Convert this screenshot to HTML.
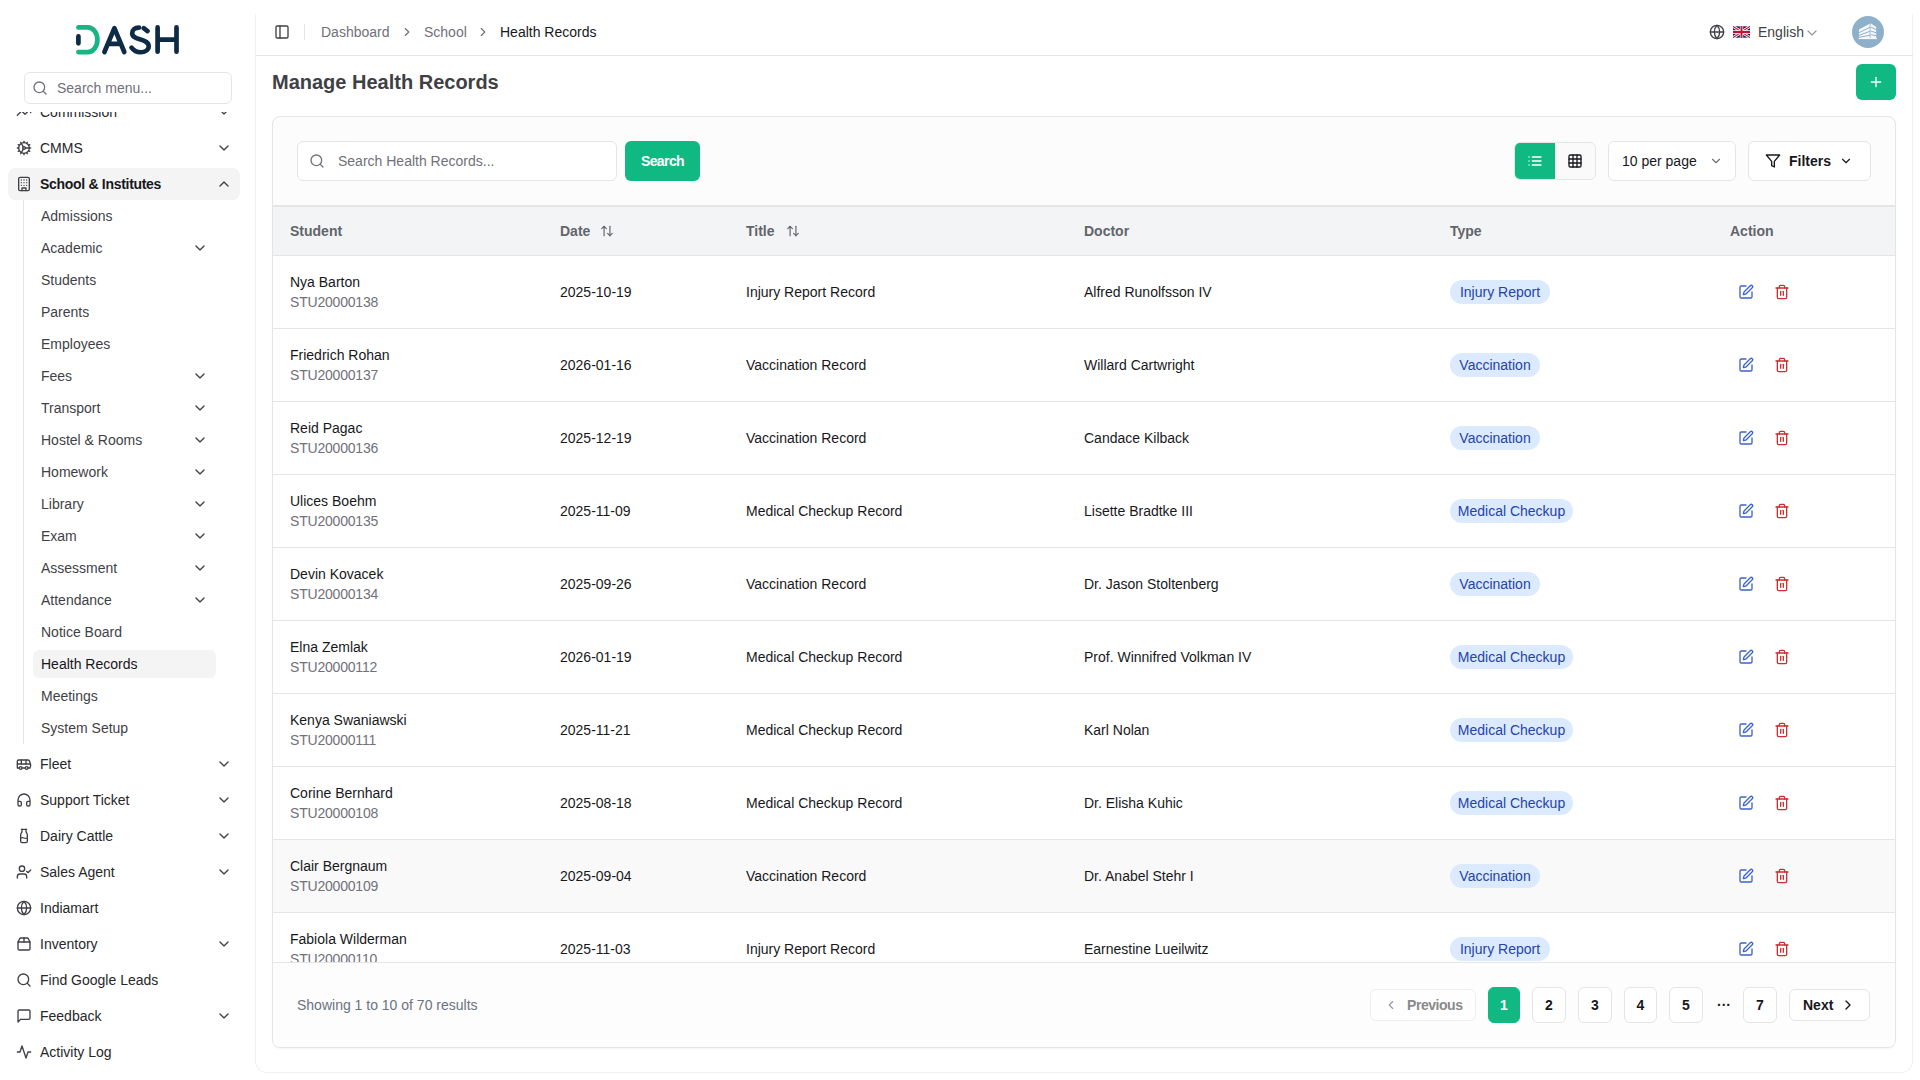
<!DOCTYPE html><html><head><meta charset="utf-8"><style>
*{box-sizing:border-box;margin:0;padding:0}
html,body{width:1920px;height:1080px;overflow:hidden;background:#fff;font-family:"Liberation Sans",sans-serif;font-size:14px;color:#18181b}
.abs{position:absolute}
svg{display:block}
#sidebar{position:absolute;left:0;top:0;width:256px;height:1080px;background:#fff}
#logo{position:absolute;left:76px;top:25px}
#sbsearch{position:absolute;left:24px;top:72px;width:208px;height:32px;border:1px solid #e5e5e5;border-radius:6px;background:#fff}
#sbsearch svg{position:absolute;left:7px;top:7px}
#sbsearch span{position:absolute;left:32px;top:5px;line-height:20px;color:#71717a}
#nav{position:absolute;left:0;top:112px;width:256px;height:968px;overflow:hidden}
.ni{position:absolute;left:8px;width:232px;height:32px;border-radius:8px;color:#27272a}
.ni svg.i{position:absolute;left:8px;top:8px;color:#3f3f46}
.ni .t{position:absolute;left:32px;top:6px;line-height:20px;white-space:nowrap}
.ni svg.c{position:absolute;left:208px;top:8px;color:#3f3f46}
.ni.act{background:#f4f4f5}
.ni.act .t{font-weight:700;color:#18181b;letter-spacing:-0.3px}
.si{position:absolute;left:33px;width:183px;height:28px;border-radius:6px;color:#3f3f46}
.si .t{position:absolute;left:8px;top:4px;line-height:20px;white-space:nowrap}
.si svg.c{position:absolute;left:159px;top:6px;color:#3f3f46}
.si.act{background:#f4f4f5;color:#18181b}
#subline{position:absolute;left:23px;top:200px;width:1px;height:544px;background:#e5e5e5}
#panel{position:absolute;left:255px;top:-20px;width:1658px;height:1093px;border:1px solid #f0f0f0;border-top:none;border-radius:0 0 12px 12px;background:#fff}
#pfade{position:absolute;left:250px;top:0;width:1670px;height:14px;background:#fff}
#header{position:absolute;left:256px;top:0;width:1657px;height:56px;border-bottom:1px solid #e5e5e5}
.bc{position:absolute;top:22px;line-height:20px;white-space:nowrap;color:#71717a}
#title{position:absolute;left:272px;top:70px;font-size:20px;font-weight:700;line-height:24px;color:#3f3f46;white-space:nowrap}
#addbtn{position:absolute;left:1856px;top:64px;width:40px;height:36px;border-radius:6px;background:#10b981}
#addbtn svg{position:absolute;left:12px;top:10px}
#card{position:absolute;left:272px;top:116px;width:1624px;height:932px;border:1px solid #e5e5e5;border-radius:8px;background:#fcfcfc;overflow:hidden;box-shadow:0 1px 2px rgba(0,0,0,0.04)}
#tsearch{position:absolute;left:297px;top:141px;width:320px;height:40px;border:1px solid #e5e5e5;border-radius:6px;background:#fff}
#tsearch svg{position:absolute;left:11px;top:11px;color:#71717a}
#tsearch span{position:absolute;left:40px;top:9px;line-height:20px;color:#71717a}
#sbtn{position:absolute;left:625px;top:141px;width:75px;height:40px;border-radius:6px;background:#10b981;color:#fff;font-weight:700;text-align:center;line-height:40px;letter-spacing:-0.6px}
#vtog{position:absolute;left:1514px;top:142px;width:82px;height:38px;border:1px solid #e5e5e5;border-radius:6px;background:#fafafa;overflow:hidden}
#vtog .g{position:absolute;left:-1px;top:-1px;width:41px;height:38px;background:#10b981}
#perpage{position:absolute;left:1608px;top:141px;width:128px;height:40px;border:1px solid #e5e5e5;border-radius:6px;background:#fff}
#filters{position:absolute;left:1748px;top:141px;width:123px;height:40px;border:1px solid #e5e5e5;border-radius:6px;background:#fff}
#thead{position:absolute;left:273px;top:205px;width:1622px;height:51px;background:#f3f4f6;border-top:2px solid #e5e5e5;border-bottom:1px solid #e5e5e5}
.th{position:absolute;top:14px;line-height:20px;font-weight:700;color:#62656b;white-space:nowrap}
#tbody{position:absolute;left:273px;top:256px;width:1622px;height:706px;overflow:hidden;background:#fff}
.tr{position:absolute;left:0;width:1622px;height:73px;border-bottom:1px solid #e5e5e5;background:#fff}
.tr.hov{background:#f9f9f9}
.td{position:absolute;line-height:20px;white-space:nowrap;color:#18181b}
.badge{position:absolute;left:1177px;top:24px;height:24px;border-radius:12px;background:#dbeafe;color:#2543a8;padding:0 8px;line-height:24px;white-space:nowrap}
#tfoot{position:absolute;left:273px;top:962px;width:1622px;height:85px;border-top:1px solid #e5e5e5;background:#fdfdfd;border-radius:0 0 7px 7px}
.pg{position:absolute;top:987px;width:34px;height:36px;border:1px solid #e5e5e5;border-radius:6px;background:#fff;text-align:center;line-height:34px;font-weight:700;color:#18181b}
.pg.act{background:#10b981;border-color:#10b981;color:#fff}
</style></head><body>
<div id="sidebar">
<svg id="logo" width="104" height="31" viewBox="0 0 104 31">
<path d="M2.4 2.4 H11.8 A9.6 12.35 0 0 1 11.8 27.1 H2.4" fill="none" stroke="#17b581" stroke-width="4.7" stroke-linecap="round"/>
<path d="M2.4 11.4 V18.3" fill="none" stroke="#0d2b45" stroke-width="4.7" stroke-linecap="round"/>
<path d="M28.4 27 L38.4 3.2 L48.3 27 M32.5 18.9 H44.3" fill="none" stroke="#0d2b45" stroke-width="4.7" stroke-linecap="round" stroke-linejoin="round"/>
<path d="M63 2.6 C58.5 2.6 56.2 5.2 56.2 8.2 C56.2 11.8 59.5 13 63.8 14.3 C68.5 15.7 72.7 17 72.7 21.2 C72.7 25 69 27.2 64.5 27.2 C60.5 27.2 57.5 25.3 55.5 22.6" fill="none" stroke="#0d2b45" stroke-width="4.6" stroke-linecap="round"/>
<path d="M67.7 3.2 L71.5 6.1" fill="none" stroke="#0d2b45" stroke-width="4.6" stroke-linecap="round"/>
<path d="M81.6 2.4 V26.7 M100.5 2.4 V26.7 M81.6 14.7 H100.5" fill="none" stroke="#0d2b45" stroke-width="4.7" stroke-linecap="round"/>
</svg>
<div id="sbsearch"><svg width="16" height="16" viewBox="0 0 24 24" fill="none" stroke="#71717a" stroke-width="2" stroke-linecap="round" stroke-linejoin="round" ><circle cx="11" cy="11" r="8"/><path d="m21 21-4.3-4.3"/></svg><span>Search menu...</span></div>
<div id="nav">
<div class="ni" style="top:-16px"><svg class="i" width="16" height="16" viewBox="0 0 24 24" fill="none" stroke="currentColor" stroke-width="2" stroke-linecap="round" stroke-linejoin="round" ><path d="m22 7-8.5 8.5-5-5L2 17"/><path d="M16 7h6v6"/></svg><span class="t">Commission</span><svg class="c" width="16" height="16" viewBox="0 0 24 24" fill="none" stroke="currentColor" stroke-width="2" stroke-linecap="round" stroke-linejoin="round" ><path d="m6 9 6 6 6-6"/></svg></div>
<div class="ni" style="top:20px"><svg class="i" width="16" height="16" viewBox="0 0 24 24" fill="none" stroke="currentColor" stroke-width="2" stroke-linecap="round" stroke-linejoin="round" ><path d="M12 20a8 8 0 1 0 0-16 8 8 0 0 0 0 16Z"/><path d="M12 14a2 2 0 1 0 0-4 2 2 0 0 0 0 4Z"/><path d="M12 2v2"/><path d="M12 22v-2"/><path d="m17 20.66-1-1.73"/><path d="M11 10.27 7 3.34"/><path d="m20.66 17-1.73-1"/><path d="m3.34 7 1.73 1"/><path d="M14 12h8"/><path d="M2 12h2"/><path d="m20.66 7-1.73 1"/><path d="m3.34 17 1.73-1"/><path d="m17 3.34-1 1.73"/><path d="m11 13.73-4 6.93"/></svg><span class="t">CMMS</span><svg class="c" width="16" height="16" viewBox="0 0 24 24" fill="none" stroke="currentColor" stroke-width="2" stroke-linecap="round" stroke-linejoin="round" ><path d="m6 9 6 6 6-6"/></svg></div>
<div class="ni act" style="top:56px"><svg class="i" width="16" height="16" viewBox="0 0 24 24" fill="none" stroke="currentColor" stroke-width="2" stroke-linecap="round" stroke-linejoin="round" ><rect width="16" height="20" x="4" y="2" rx="2" ry="2"/><path d="M9 22v-4h6v4"/><path d="M8 6h.01"/><path d="M16 6h.01"/><path d="M12 6h.01"/><path d="M12 10h.01"/><path d="M12 14h.01"/><path d="M16 10h.01"/><path d="M16 14h.01"/><path d="M8 10h.01"/><path d="M8 14h.01"/></svg><span class="t">School &amp; Institutes</span><svg class="c" width="16" height="16" viewBox="0 0 24 24" fill="none" stroke="currentColor" stroke-width="2" stroke-linecap="round" stroke-linejoin="round" ><path d="m18 15-6-6-6 6"/></svg></div>
<div id="subline" style="top:88px"></div>
<div class="si" style="top:90px"><span class="t">Admissions</span></div>
<div class="si" style="top:122px"><span class="t">Academic</span><svg class="c" width="16" height="16" viewBox="0 0 24 24" fill="none" stroke="currentColor" stroke-width="2" stroke-linecap="round" stroke-linejoin="round" ><path d="m6 9 6 6 6-6"/></svg></div>
<div class="si" style="top:154px"><span class="t">Students</span></div>
<div class="si" style="top:186px"><span class="t">Parents</span></div>
<div class="si" style="top:218px"><span class="t">Employees</span></div>
<div class="si" style="top:250px"><span class="t">Fees</span><svg class="c" width="16" height="16" viewBox="0 0 24 24" fill="none" stroke="currentColor" stroke-width="2" stroke-linecap="round" stroke-linejoin="round" ><path d="m6 9 6 6 6-6"/></svg></div>
<div class="si" style="top:282px"><span class="t">Transport</span><svg class="c" width="16" height="16" viewBox="0 0 24 24" fill="none" stroke="currentColor" stroke-width="2" stroke-linecap="round" stroke-linejoin="round" ><path d="m6 9 6 6 6-6"/></svg></div>
<div class="si" style="top:314px"><span class="t">Hostel &amp; Rooms</span><svg class="c" width="16" height="16" viewBox="0 0 24 24" fill="none" stroke="currentColor" stroke-width="2" stroke-linecap="round" stroke-linejoin="round" ><path d="m6 9 6 6 6-6"/></svg></div>
<div class="si" style="top:346px"><span class="t">Homework</span><svg class="c" width="16" height="16" viewBox="0 0 24 24" fill="none" stroke="currentColor" stroke-width="2" stroke-linecap="round" stroke-linejoin="round" ><path d="m6 9 6 6 6-6"/></svg></div>
<div class="si" style="top:378px"><span class="t">Library</span><svg class="c" width="16" height="16" viewBox="0 0 24 24" fill="none" stroke="currentColor" stroke-width="2" stroke-linecap="round" stroke-linejoin="round" ><path d="m6 9 6 6 6-6"/></svg></div>
<div class="si" style="top:410px"><span class="t">Exam</span><svg class="c" width="16" height="16" viewBox="0 0 24 24" fill="none" stroke="currentColor" stroke-width="2" stroke-linecap="round" stroke-linejoin="round" ><path d="m6 9 6 6 6-6"/></svg></div>
<div class="si" style="top:442px"><span class="t">Assessment</span><svg class="c" width="16" height="16" viewBox="0 0 24 24" fill="none" stroke="currentColor" stroke-width="2" stroke-linecap="round" stroke-linejoin="round" ><path d="m6 9 6 6 6-6"/></svg></div>
<div class="si" style="top:474px"><span class="t">Attendance</span><svg class="c" width="16" height="16" viewBox="0 0 24 24" fill="none" stroke="currentColor" stroke-width="2" stroke-linecap="round" stroke-linejoin="round" ><path d="m6 9 6 6 6-6"/></svg></div>
<div class="si" style="top:506px"><span class="t">Notice Board</span></div>
<div class="si act" style="top:538px"><span class="t">Health Records</span></div>
<div class="si" style="top:570px"><span class="t">Meetings</span></div>
<div class="si" style="top:602px"><span class="t">System Setup</span></div>
<div class="ni" style="top:636px"><svg class="i" width="16" height="16" viewBox="0 0 24 24" fill="none" stroke="currentColor" stroke-width="2" stroke-linecap="round" stroke-linejoin="round" ><path d="M8 6v6"/><path d="M15 6v6"/><path d="M2 12h19.6"/><path d="M18 18h3s.5-1.7.8-2.8c.1-.4.2-.8.2-1.2 0-.4-.1-.8-.2-1.2l-1.4-5C20.1 6.8 19.1 6 18 6H4a2 2 0 0 0-2 2v10h3"/><circle cx="7" cy="18" r="2"/><path d="M9 18h5"/><circle cx="16" cy="18" r="2"/></svg><span class="t">Fleet</span><svg class="c" width="16" height="16" viewBox="0 0 24 24" fill="none" stroke="currentColor" stroke-width="2" stroke-linecap="round" stroke-linejoin="round" ><path d="m6 9 6 6 6-6"/></svg></div>
<div class="ni" style="top:672px"><svg class="i" width="16" height="16" viewBox="0 0 24 24" fill="none" stroke="currentColor" stroke-width="2" stroke-linecap="round" stroke-linejoin="round" ><path d="M3 14h3a2 2 0 0 1 2 2v3a2 2 0 0 1-2 2H5a2 2 0 0 1-2-2v-7a9 9 0 0 1 18 0v7a2 2 0 0 1-2 2h-1a2 2 0 0 1-2-2v-3a2 2 0 0 1 2-2h3"/></svg><span class="t">Support Ticket</span><svg class="c" width="16" height="16" viewBox="0 0 24 24" fill="none" stroke="currentColor" stroke-width="2" stroke-linecap="round" stroke-linejoin="round" ><path d="m6 9 6 6 6-6"/></svg></div>
<div class="ni" style="top:708px"><svg class="i" width="16" height="16" viewBox="0 0 24 24" fill="none" stroke="currentColor" stroke-width="2" stroke-linecap="round" stroke-linejoin="round" ><path d="M8 2h8"/><path d="M9 2v2.789a4 4 0 0 1-.672 2.219l-.656.984A4 4 0 0 0 7 10.212V20a2 2 0 0 0 2 2h6a2 2 0 0 0 2-2v-9.789a4 4 0 0 0-.672-2.219l-.656-.984A4 4 0 0 1 15 4.788V2"/><path d="M7 15a6.472 6.472 0 0 1 5 0 6.47 6.47 0 0 0 5 0"/></svg><span class="t">Dairy Cattle</span><svg class="c" width="16" height="16" viewBox="0 0 24 24" fill="none" stroke="currentColor" stroke-width="2" stroke-linecap="round" stroke-linejoin="round" ><path d="m6 9 6 6 6-6"/></svg></div>
<div class="ni" style="top:744px"><svg class="i" width="16" height="16" viewBox="0 0 24 24" fill="none" stroke="currentColor" stroke-width="2" stroke-linecap="round" stroke-linejoin="round" ><path d="M16 21v-2a4 4 0 0 0-4-4H6a4 4 0 0 0-4 4v2"/><circle cx="9" cy="7" r="4"/><polyline points="16 11 18 13 22 9"/></svg><span class="t">Sales Agent</span><svg class="c" width="16" height="16" viewBox="0 0 24 24" fill="none" stroke="currentColor" stroke-width="2" stroke-linecap="round" stroke-linejoin="round" ><path d="m6 9 6 6 6-6"/></svg></div>
<div class="ni" style="top:780px"><svg class="i" width="16" height="16" viewBox="0 0 24 24" fill="none" stroke="currentColor" stroke-width="2" stroke-linecap="round" stroke-linejoin="round" ><circle cx="12" cy="12" r="10"/><path d="M12 2a14.5 14.5 0 0 0 0 20 14.5 14.5 0 0 0 0-20"/><path d="M2 12h20"/></svg><span class="t">Indiamart</span></div>
<div class="ni" style="top:816px"><svg class="i" width="16" height="16" viewBox="0 0 24 24" fill="none" stroke="currentColor" stroke-width="2" stroke-linecap="round" stroke-linejoin="round" ><path d="M3 9h18v10a2 2 0 0 1-2 2H5a2 2 0 0 1-2-2V9Z"/><path d="m3 9 2.45-4.9A2 2 0 0 1 7.24 3h9.52a2 2 0 0 1 1.8 1.1L21 9"/><path d="M12 3v6"/></svg><span class="t">Inventory</span><svg class="c" width="16" height="16" viewBox="0 0 24 24" fill="none" stroke="currentColor" stroke-width="2" stroke-linecap="round" stroke-linejoin="round" ><path d="m6 9 6 6 6-6"/></svg></div>
<div class="ni" style="top:852px"><svg class="i" width="16" height="16" viewBox="0 0 24 24" fill="none" stroke="currentColor" stroke-width="2" stroke-linecap="round" stroke-linejoin="round" ><circle cx="11" cy="11" r="8"/><path d="m21 21-4.3-4.3"/></svg><span class="t">Find Google Leads</span></div>
<div class="ni" style="top:888px"><svg class="i" width="16" height="16" viewBox="0 0 24 24" fill="none" stroke="currentColor" stroke-width="2" stroke-linecap="round" stroke-linejoin="round" ><path d="M21 15a2 2 0 0 1-2 2H7l-4 4V5a2 2 0 0 1 2-2h14a2 2 0 0 1 2 2z"/></svg><span class="t">Feedback</span><svg class="c" width="16" height="16" viewBox="0 0 24 24" fill="none" stroke="currentColor" stroke-width="2" stroke-linecap="round" stroke-linejoin="round" ><path d="m6 9 6 6 6-6"/></svg></div>
<div class="ni" style="top:924px"><svg class="i" width="16" height="16" viewBox="0 0 24 24" fill="none" stroke="currentColor" stroke-width="2" stroke-linecap="round" stroke-linejoin="round" ><path d="M22 12h-4l-3 9L9 3l-3 9H2"/></svg><span class="t">Activity Log</span></div>
</div></div>
<div id="panel"></div><div id="pfade"></div>
<div id="header">
</div>
<svg width="16" height="16" viewBox="0 0 24 24" fill="none" stroke="#3f3f46" stroke-width="2" stroke-linecap="round" stroke-linejoin="round" style="position:absolute;left:274px;top:24px"><rect width="18" height="18" x="3" y="3" rx="2"/><path d="M9 3v18"/></svg>
<div class="abs" style="left:304px;top:24px;width:1px;height:16px;background:#e5e5e5"></div>
<span class="bc" style="left:321px">Dashboard</span>
<svg width="14" height="14" viewBox="0 0 24 24" fill="none" stroke="#71717a" stroke-width="2" stroke-linecap="round" stroke-linejoin="round" style="position:absolute;left:400px;top:25px"><path d="m9 18 6-6-6-6"/></svg>
<span class="bc" style="left:424px">School</span>
<svg width="14" height="14" viewBox="0 0 24 24" fill="none" stroke="#71717a" stroke-width="2" stroke-linecap="round" stroke-linejoin="round" style="position:absolute;left:476px;top:25px"><path d="m9 18 6-6-6-6"/></svg>
<span class="bc" style="left:500px;color:#18181b">Health Records</span>
<svg width="16" height="16" viewBox="0 0 24 24" fill="none" stroke="#3f3f46" stroke-width="2" stroke-linecap="round" stroke-linejoin="round" style="position:absolute;left:1709px;top:24px"><circle cx="12" cy="12" r="10"/><path d="M12 2a14.5 14.5 0 0 0 0 20 14.5 14.5 0 0 0 0-20"/><path d="M2 12h20"/></svg>
<svg class="abs" style="left:1733px;top:26px" width="17" height="12" viewBox="0 0 60 40">
<rect width="60" height="40" fill="#012169"/>
<path d="M0 0L60 40M60 0L0 40" stroke="#fff" stroke-width="10"/>
<path d="M0 0L60 40M60 0L0 40" stroke="#C8102E" stroke-width="4"/>
<path d="M30 0V40M0 20H60" stroke="#fff" stroke-width="12"/>
<path d="M30 0V40M0 20H60" stroke="#C8102E" stroke-width="7"/>
</svg>
<span class="abs" style="left:1758px;top:22px;line-height:20px;color:#3f3f46">English</span>
<svg width="16" height="16" viewBox="0 0 24 24" fill="none" stroke="#939393" stroke-width="1.7" stroke-linecap="round" stroke-linejoin="round" style="position:absolute;left:1804px;top:24.5px"><path d="m6 9 6 6 6-6"/></svg>
<svg class="abs" style="left:1852px;top:16px" width="32" height="32" viewBox="0 0 32 32">
<circle cx="16" cy="16" r="16" fill="#8fb0cb"/>
<path d="M7 13.6 L18.6 7.3 L18.6 22.3 L7 22.3 Z M18.6 7.3 L24.2 11 L24.2 22.3 L18.6 22.3 Z" fill="#f4f8fb"/>
<g stroke="#8fb0cb" stroke-width="1" fill="none">
<path d="M6.5 16.9 L18.1 11.2 M6.5 19.6 L18.1 15.2 M19.1 11.2 L24.7 13.9 M19.1 15.2 L24.7 16.9 M19.1 18.8 L24.7 19.6 M6.5 21.4 L18.1 19.2"/>
<path d="M18.1 7 V22.5" stroke-width="0.8"/>
</g>
<path d="M6.5 22.6 H25" stroke="#fff" stroke-width="1"/>
</svg>
<div id="title">Manage Health Records</div>
<div id="addbtn"><svg width="16" height="16" viewBox="0 0 24 24" fill="none" stroke="#fff" stroke-width="2" stroke-linecap="round" stroke-linejoin="round" ><path d="M5 12h14"/><path d="M12 5v14"/></svg></div>
<div id="card"></div>
<div id="tsearch"><svg width="16" height="16" viewBox="0 0 24 24" fill="none" stroke="#71717a" stroke-width="2" stroke-linecap="round" stroke-linejoin="round" ><circle cx="11" cy="11" r="8"/><path d="m21 21-4.3-4.3"/></svg><span>Search Health Records...</span></div>
<div id="sbtn">Search</div>
<div id="vtog"><div class="g"></div><svg width="16" height="16" viewBox="0 0 24 24" fill="none" stroke="#fff" stroke-width="2" stroke-linecap="round" stroke-linejoin="round" style="position:absolute;left:12px;top:10px"><path d="M3 12h.01"/><path d="M3 18h.01"/><path d="M3 6h.01"/><path d="M8 12h13"/><path d="M8 18h13"/><path d="M8 6h13"/></svg><svg width="16" height="16" viewBox="0 0 24 24" fill="none" stroke="#18181b" stroke-width="2" stroke-linecap="round" stroke-linejoin="round" style="position:absolute;left:52px;top:10px"><rect width="18" height="18" x="3" y="3" rx="2"/><path d="M3 9h18"/><path d="M3 15h18"/><path d="M9 3v18"/><path d="M15 3v18"/></svg></div>
<div id="perpage"><span class="abs" style="left:13px;top:9px;line-height:20px;color:#18181b">10 per page</span><svg width="14" height="14" viewBox="0 0 24 24" fill="none" stroke="#71717a" stroke-width="2" stroke-linecap="round" stroke-linejoin="round" style="position:absolute;left:100px;top:12px"><path d="m6 9 6 6 6-6"/></svg></div>
<div id="filters"><svg width="16" height="16" viewBox="0 0 24 24" fill="none" stroke="#18181b" stroke-width="2" stroke-linecap="round" stroke-linejoin="round" style="position:absolute;left:16px;top:11px"><polygon points="22 3 2 3 10 12.46 10 19 14 21 14 12.46 22 3"/></svg><span class="abs" style="left:40px;top:9px;line-height:20px;font-weight:700;color:#18181b">Filters</span><svg width="14" height="14" viewBox="0 0 24 24" fill="none" stroke="#18181b" stroke-width="2" stroke-linecap="round" stroke-linejoin="round" style="position:absolute;left:90px;top:12px"><path d="m6 9 6 6 6-6"/></svg></div>
<div id="thead">
<span class="th" style="left:17px">Student</span>
<span class="th" style="left:287px">Date</span><svg width="14" height="14" viewBox="0 0 24 24" fill="none" stroke="#62656b" stroke-width="2" stroke-linecap="round" stroke-linejoin="round" style="position:absolute;left:327px;top:17px"><path d="m21 16-4 4-4-4"/><path d="M17 20V4"/><path d="m3 8 4-4 4 4"/><path d="M7 4v16"/></svg>
<span class="th" style="left:473px">Title</span><svg width="14" height="14" viewBox="0 0 24 24" fill="none" stroke="#62656b" stroke-width="2" stroke-linecap="round" stroke-linejoin="round" style="position:absolute;left:513px;top:17px"><path d="m21 16-4 4-4-4"/><path d="M17 20V4"/><path d="m3 8 4-4 4 4"/><path d="M7 4v16"/></svg>
<span class="th" style="left:811px">Doctor</span>
<span class="th" style="left:1177px">Type</span>
<span class="th" style="left:1457px">Action</span>
</div>
<div id="tbody">
<div class="tr" style="top:0px"><span class="td" style="left:17px;top:16px;color:#18181b">Nya Barton</span><span class="td" style="left:17px;top:36px;color:#71717a;letter-spacing:-0.2px">STU20000138</span><span class="td" style="left:287px;top:26px">2025-10-19</span><span class="td" style="left:473px;top:26px">Injury Report Record</span><span class="td" style="left:811px;top:26px">Alfred Runolfsson IV</span><span class="badge" style="width:100px;text-align:center;padding:0">Injury Report</span><svg width="16" height="16" viewBox="0 0 24 24" fill="none" stroke="#3b63c9" stroke-width="2" stroke-linecap="round" stroke-linejoin="round" style="position:absolute;left:1465px;top:28px"><path d="M12 3H5a2 2 0 0 0-2 2v14a2 2 0 0 0 2 2h14a2 2 0 0 0 2-2v-7"/><path d="M18.375 2.625a1 1 0 0 1 3 3l-9.013 9.014a2 2 0 0 1-.853.505l-2.873.84a.5.5 0 0 1-.62-.62l.84-2.873a2 2 0 0 1 .506-.852z"/></svg><svg width="16" height="16" viewBox="0 0 24 24" fill="none" stroke="#cc2f2f" stroke-width="2" stroke-linecap="round" stroke-linejoin="round" style="position:absolute;left:1501px;top:28px"><path d="M3 6h18"/><path d="M19 6v14c0 1-1 2-2 2H7c-1 0-2-1-2-2V6"/><path d="M8 6V4c0-1 1-2 2-2h4c1 0 2 1 2 2v2"/><line x1="10" x2="10" y1="11" y2="17"/><line x1="14" x2="14" y1="11" y2="17"/></svg></div>
<div class="tr" style="top:73px"><span class="td" style="left:17px;top:16px;color:#18181b">Friedrich Rohan</span><span class="td" style="left:17px;top:36px;color:#71717a;letter-spacing:-0.2px">STU20000137</span><span class="td" style="left:287px;top:26px">2026-01-16</span><span class="td" style="left:473px;top:26px">Vaccination Record</span><span class="td" style="left:811px;top:26px">Willard Cartwright</span><span class="badge" style="width:90px;text-align:center;padding:0">Vaccination</span><svg width="16" height="16" viewBox="0 0 24 24" fill="none" stroke="#3b63c9" stroke-width="2" stroke-linecap="round" stroke-linejoin="round" style="position:absolute;left:1465px;top:28px"><path d="M12 3H5a2 2 0 0 0-2 2v14a2 2 0 0 0 2 2h14a2 2 0 0 0 2-2v-7"/><path d="M18.375 2.625a1 1 0 0 1 3 3l-9.013 9.014a2 2 0 0 1-.853.505l-2.873.84a.5.5 0 0 1-.62-.62l.84-2.873a2 2 0 0 1 .506-.852z"/></svg><svg width="16" height="16" viewBox="0 0 24 24" fill="none" stroke="#cc2f2f" stroke-width="2" stroke-linecap="round" stroke-linejoin="round" style="position:absolute;left:1501px;top:28px"><path d="M3 6h18"/><path d="M19 6v14c0 1-1 2-2 2H7c-1 0-2-1-2-2V6"/><path d="M8 6V4c0-1 1-2 2-2h4c1 0 2 1 2 2v2"/><line x1="10" x2="10" y1="11" y2="17"/><line x1="14" x2="14" y1="11" y2="17"/></svg></div>
<div class="tr" style="top:146px"><span class="td" style="left:17px;top:16px;color:#18181b">Reid Pagac</span><span class="td" style="left:17px;top:36px;color:#71717a;letter-spacing:-0.2px">STU20000136</span><span class="td" style="left:287px;top:26px">2025-12-19</span><span class="td" style="left:473px;top:26px">Vaccination Record</span><span class="td" style="left:811px;top:26px">Candace Kilback</span><span class="badge" style="width:90px;text-align:center;padding:0">Vaccination</span><svg width="16" height="16" viewBox="0 0 24 24" fill="none" stroke="#3b63c9" stroke-width="2" stroke-linecap="round" stroke-linejoin="round" style="position:absolute;left:1465px;top:28px"><path d="M12 3H5a2 2 0 0 0-2 2v14a2 2 0 0 0 2 2h14a2 2 0 0 0 2-2v-7"/><path d="M18.375 2.625a1 1 0 0 1 3 3l-9.013 9.014a2 2 0 0 1-.853.505l-2.873.84a.5.5 0 0 1-.62-.62l.84-2.873a2 2 0 0 1 .506-.852z"/></svg><svg width="16" height="16" viewBox="0 0 24 24" fill="none" stroke="#cc2f2f" stroke-width="2" stroke-linecap="round" stroke-linejoin="round" style="position:absolute;left:1501px;top:28px"><path d="M3 6h18"/><path d="M19 6v14c0 1-1 2-2 2H7c-1 0-2-1-2-2V6"/><path d="M8 6V4c0-1 1-2 2-2h4c1 0 2 1 2 2v2"/><line x1="10" x2="10" y1="11" y2="17"/><line x1="14" x2="14" y1="11" y2="17"/></svg></div>
<div class="tr" style="top:219px"><span class="td" style="left:17px;top:16px;color:#18181b">Ulices Boehm</span><span class="td" style="left:17px;top:36px;color:#71717a;letter-spacing:-0.2px">STU20000135</span><span class="td" style="left:287px;top:26px">2025-11-09</span><span class="td" style="left:473px;top:26px">Medical Checkup Record</span><span class="td" style="left:811px;top:26px">Lisette Bradtke III</span><span class="badge" style="width:123px;text-align:center;padding:0">Medical Checkup</span><svg width="16" height="16" viewBox="0 0 24 24" fill="none" stroke="#3b63c9" stroke-width="2" stroke-linecap="round" stroke-linejoin="round" style="position:absolute;left:1465px;top:28px"><path d="M12 3H5a2 2 0 0 0-2 2v14a2 2 0 0 0 2 2h14a2 2 0 0 0 2-2v-7"/><path d="M18.375 2.625a1 1 0 0 1 3 3l-9.013 9.014a2 2 0 0 1-.853.505l-2.873.84a.5.5 0 0 1-.62-.62l.84-2.873a2 2 0 0 1 .506-.852z"/></svg><svg width="16" height="16" viewBox="0 0 24 24" fill="none" stroke="#cc2f2f" stroke-width="2" stroke-linecap="round" stroke-linejoin="round" style="position:absolute;left:1501px;top:28px"><path d="M3 6h18"/><path d="M19 6v14c0 1-1 2-2 2H7c-1 0-2-1-2-2V6"/><path d="M8 6V4c0-1 1-2 2-2h4c1 0 2 1 2 2v2"/><line x1="10" x2="10" y1="11" y2="17"/><line x1="14" x2="14" y1="11" y2="17"/></svg></div>
<div class="tr" style="top:292px"><span class="td" style="left:17px;top:16px;color:#18181b">Devin Kovacek</span><span class="td" style="left:17px;top:36px;color:#71717a;letter-spacing:-0.2px">STU20000134</span><span class="td" style="left:287px;top:26px">2025-09-26</span><span class="td" style="left:473px;top:26px">Vaccination Record</span><span class="td" style="left:811px;top:26px">Dr. Jason Stoltenberg</span><span class="badge" style="width:90px;text-align:center;padding:0">Vaccination</span><svg width="16" height="16" viewBox="0 0 24 24" fill="none" stroke="#3b63c9" stroke-width="2" stroke-linecap="round" stroke-linejoin="round" style="position:absolute;left:1465px;top:28px"><path d="M12 3H5a2 2 0 0 0-2 2v14a2 2 0 0 0 2 2h14a2 2 0 0 0 2-2v-7"/><path d="M18.375 2.625a1 1 0 0 1 3 3l-9.013 9.014a2 2 0 0 1-.853.505l-2.873.84a.5.5 0 0 1-.62-.62l.84-2.873a2 2 0 0 1 .506-.852z"/></svg><svg width="16" height="16" viewBox="0 0 24 24" fill="none" stroke="#cc2f2f" stroke-width="2" stroke-linecap="round" stroke-linejoin="round" style="position:absolute;left:1501px;top:28px"><path d="M3 6h18"/><path d="M19 6v14c0 1-1 2-2 2H7c-1 0-2-1-2-2V6"/><path d="M8 6V4c0-1 1-2 2-2h4c1 0 2 1 2 2v2"/><line x1="10" x2="10" y1="11" y2="17"/><line x1="14" x2="14" y1="11" y2="17"/></svg></div>
<div class="tr" style="top:365px"><span class="td" style="left:17px;top:16px;color:#18181b">Elna Zemlak</span><span class="td" style="left:17px;top:36px;color:#71717a;letter-spacing:-0.2px">STU20000112</span><span class="td" style="left:287px;top:26px">2026-01-19</span><span class="td" style="left:473px;top:26px">Medical Checkup Record</span><span class="td" style="left:811px;top:26px">Prof. Winnifred Volkman IV</span><span class="badge" style="width:123px;text-align:center;padding:0">Medical Checkup</span><svg width="16" height="16" viewBox="0 0 24 24" fill="none" stroke="#3b63c9" stroke-width="2" stroke-linecap="round" stroke-linejoin="round" style="position:absolute;left:1465px;top:28px"><path d="M12 3H5a2 2 0 0 0-2 2v14a2 2 0 0 0 2 2h14a2 2 0 0 0 2-2v-7"/><path d="M18.375 2.625a1 1 0 0 1 3 3l-9.013 9.014a2 2 0 0 1-.853.505l-2.873.84a.5.5 0 0 1-.62-.62l.84-2.873a2 2 0 0 1 .506-.852z"/></svg><svg width="16" height="16" viewBox="0 0 24 24" fill="none" stroke="#cc2f2f" stroke-width="2" stroke-linecap="round" stroke-linejoin="round" style="position:absolute;left:1501px;top:28px"><path d="M3 6h18"/><path d="M19 6v14c0 1-1 2-2 2H7c-1 0-2-1-2-2V6"/><path d="M8 6V4c0-1 1-2 2-2h4c1 0 2 1 2 2v2"/><line x1="10" x2="10" y1="11" y2="17"/><line x1="14" x2="14" y1="11" y2="17"/></svg></div>
<div class="tr" style="top:438px"><span class="td" style="left:17px;top:16px;color:#18181b">Kenya Swaniawski</span><span class="td" style="left:17px;top:36px;color:#71717a;letter-spacing:-0.2px">STU20000111</span><span class="td" style="left:287px;top:26px">2025-11-21</span><span class="td" style="left:473px;top:26px">Medical Checkup Record</span><span class="td" style="left:811px;top:26px">Karl Nolan</span><span class="badge" style="width:123px;text-align:center;padding:0">Medical Checkup</span><svg width="16" height="16" viewBox="0 0 24 24" fill="none" stroke="#3b63c9" stroke-width="2" stroke-linecap="round" stroke-linejoin="round" style="position:absolute;left:1465px;top:28px"><path d="M12 3H5a2 2 0 0 0-2 2v14a2 2 0 0 0 2 2h14a2 2 0 0 0 2-2v-7"/><path d="M18.375 2.625a1 1 0 0 1 3 3l-9.013 9.014a2 2 0 0 1-.853.505l-2.873.84a.5.5 0 0 1-.62-.62l.84-2.873a2 2 0 0 1 .506-.852z"/></svg><svg width="16" height="16" viewBox="0 0 24 24" fill="none" stroke="#cc2f2f" stroke-width="2" stroke-linecap="round" stroke-linejoin="round" style="position:absolute;left:1501px;top:28px"><path d="M3 6h18"/><path d="M19 6v14c0 1-1 2-2 2H7c-1 0-2-1-2-2V6"/><path d="M8 6V4c0-1 1-2 2-2h4c1 0 2 1 2 2v2"/><line x1="10" x2="10" y1="11" y2="17"/><line x1="14" x2="14" y1="11" y2="17"/></svg></div>
<div class="tr" style="top:511px"><span class="td" style="left:17px;top:16px;color:#18181b">Corine Bernhard</span><span class="td" style="left:17px;top:36px;color:#71717a;letter-spacing:-0.2px">STU20000108</span><span class="td" style="left:287px;top:26px">2025-08-18</span><span class="td" style="left:473px;top:26px">Medical Checkup Record</span><span class="td" style="left:811px;top:26px">Dr. Elisha Kuhic</span><span class="badge" style="width:123px;text-align:center;padding:0">Medical Checkup</span><svg width="16" height="16" viewBox="0 0 24 24" fill="none" stroke="#3b63c9" stroke-width="2" stroke-linecap="round" stroke-linejoin="round" style="position:absolute;left:1465px;top:28px"><path d="M12 3H5a2 2 0 0 0-2 2v14a2 2 0 0 0 2 2h14a2 2 0 0 0 2-2v-7"/><path d="M18.375 2.625a1 1 0 0 1 3 3l-9.013 9.014a2 2 0 0 1-.853.505l-2.873.84a.5.5 0 0 1-.62-.62l.84-2.873a2 2 0 0 1 .506-.852z"/></svg><svg width="16" height="16" viewBox="0 0 24 24" fill="none" stroke="#cc2f2f" stroke-width="2" stroke-linecap="round" stroke-linejoin="round" style="position:absolute;left:1501px;top:28px"><path d="M3 6h18"/><path d="M19 6v14c0 1-1 2-2 2H7c-1 0-2-1-2-2V6"/><path d="M8 6V4c0-1 1-2 2-2h4c1 0 2 1 2 2v2"/><line x1="10" x2="10" y1="11" y2="17"/><line x1="14" x2="14" y1="11" y2="17"/></svg></div>
<div class="tr hov" style="top:584px"><span class="td" style="left:17px;top:16px;color:#18181b">Clair Bergnaum</span><span class="td" style="left:17px;top:36px;color:#71717a;letter-spacing:-0.2px">STU20000109</span><span class="td" style="left:287px;top:26px">2025-09-04</span><span class="td" style="left:473px;top:26px">Vaccination Record</span><span class="td" style="left:811px;top:26px">Dr. Anabel Stehr I</span><span class="badge" style="width:90px;text-align:center;padding:0">Vaccination</span><svg width="16" height="16" viewBox="0 0 24 24" fill="none" stroke="#3b63c9" stroke-width="2" stroke-linecap="round" stroke-linejoin="round" style="position:absolute;left:1465px;top:28px"><path d="M12 3H5a2 2 0 0 0-2 2v14a2 2 0 0 0 2 2h14a2 2 0 0 0 2-2v-7"/><path d="M18.375 2.625a1 1 0 0 1 3 3l-9.013 9.014a2 2 0 0 1-.853.505l-2.873.84a.5.5 0 0 1-.62-.62l.84-2.873a2 2 0 0 1 .506-.852z"/></svg><svg width="16" height="16" viewBox="0 0 24 24" fill="none" stroke="#cc2f2f" stroke-width="2" stroke-linecap="round" stroke-linejoin="round" style="position:absolute;left:1501px;top:28px"><path d="M3 6h18"/><path d="M19 6v14c0 1-1 2-2 2H7c-1 0-2-1-2-2V6"/><path d="M8 6V4c0-1 1-2 2-2h4c1 0 2 1 2 2v2"/><line x1="10" x2="10" y1="11" y2="17"/><line x1="14" x2="14" y1="11" y2="17"/></svg></div>
<div class="tr" style="top:657px"><span class="td" style="left:17px;top:16px;color:#18181b">Fabiola Wilderman</span><span class="td" style="left:17px;top:36px;color:#71717a;letter-spacing:-0.2px">STU20000110</span><span class="td" style="left:287px;top:26px">2025-11-03</span><span class="td" style="left:473px;top:26px">Injury Report Record</span><span class="td" style="left:811px;top:26px">Earnestine Lueilwitz</span><span class="badge" style="width:100px;text-align:center;padding:0">Injury Report</span><svg width="16" height="16" viewBox="0 0 24 24" fill="none" stroke="#3b63c9" stroke-width="2" stroke-linecap="round" stroke-linejoin="round" style="position:absolute;left:1465px;top:28px"><path d="M12 3H5a2 2 0 0 0-2 2v14a2 2 0 0 0 2 2h14a2 2 0 0 0 2-2v-7"/><path d="M18.375 2.625a1 1 0 0 1 3 3l-9.013 9.014a2 2 0 0 1-.853.505l-2.873.84a.5.5 0 0 1-.62-.62l.84-2.873a2 2 0 0 1 .506-.852z"/></svg><svg width="16" height="16" viewBox="0 0 24 24" fill="none" stroke="#cc2f2f" stroke-width="2" stroke-linecap="round" stroke-linejoin="round" style="position:absolute;left:1501px;top:28px"><path d="M3 6h18"/><path d="M19 6v14c0 1-1 2-2 2H7c-1 0-2-1-2-2V6"/><path d="M8 6V4c0-1 1-2 2-2h4c1 0 2 1 2 2v2"/><line x1="10" x2="10" y1="11" y2="17"/><line x1="14" x2="14" y1="11" y2="17"/></svg></div>
</div>
<div id="tfoot"></div>
<span class="abs" style="left:297px;top:995px;line-height:20px;color:#6b7280">Showing 1 to 10 of 70 results</span>
<div class="abs" style="left:1370px;top:989px;width:106px;height:32px;border:1px solid #eeeeee;border-radius:6px;background:#fefefe"><svg width="14" height="14" viewBox="0 0 24 24" fill="none" stroke="#9a9a9a" stroke-width="2" stroke-linecap="round" stroke-linejoin="round" style="position:absolute;left:13px;top:8px"><path d="m15 18-6-6 6-6"/></svg><span class="abs" style="left:36px;top:5px;line-height:20px;color:#8a8a8a;font-weight:700;letter-spacing:-0.45px">Previous</span></div>
<div class="pg act" style="left:1488px;width:32px">1</div>
<div class="pg" style="left:1532px;width:34px">2</div>
<div class="pg" style="left:1578px;width:34px">3</div>
<div class="pg" style="left:1624px;width:33px">4</div>
<div class="pg" style="left:1669px;width:34px">5</div>
<div class="pg" style="left:1743px;width:34px">7</div>
<span class="abs" style="left:1717px;top:995px;line-height:20px;font-weight:700;color:#18181b">&middot;&middot;&middot;</span>
<div class="abs" style="left:1789px;top:989px;width:81px;height:32px;border:1px solid #e5e5e5;border-radius:6px;background:#fff"><span class="abs" style="left:13px;top:5px;line-height:20px;color:#18181b;font-weight:700">Next</span><svg width="16" height="16" viewBox="0 0 24 24" fill="none" stroke="#18181b" stroke-width="2" stroke-linecap="round" stroke-linejoin="round" style="position:absolute;left:50px;top:7px"><path d="m9 18 6-6-6-6"/></svg></div>
</body></html>
